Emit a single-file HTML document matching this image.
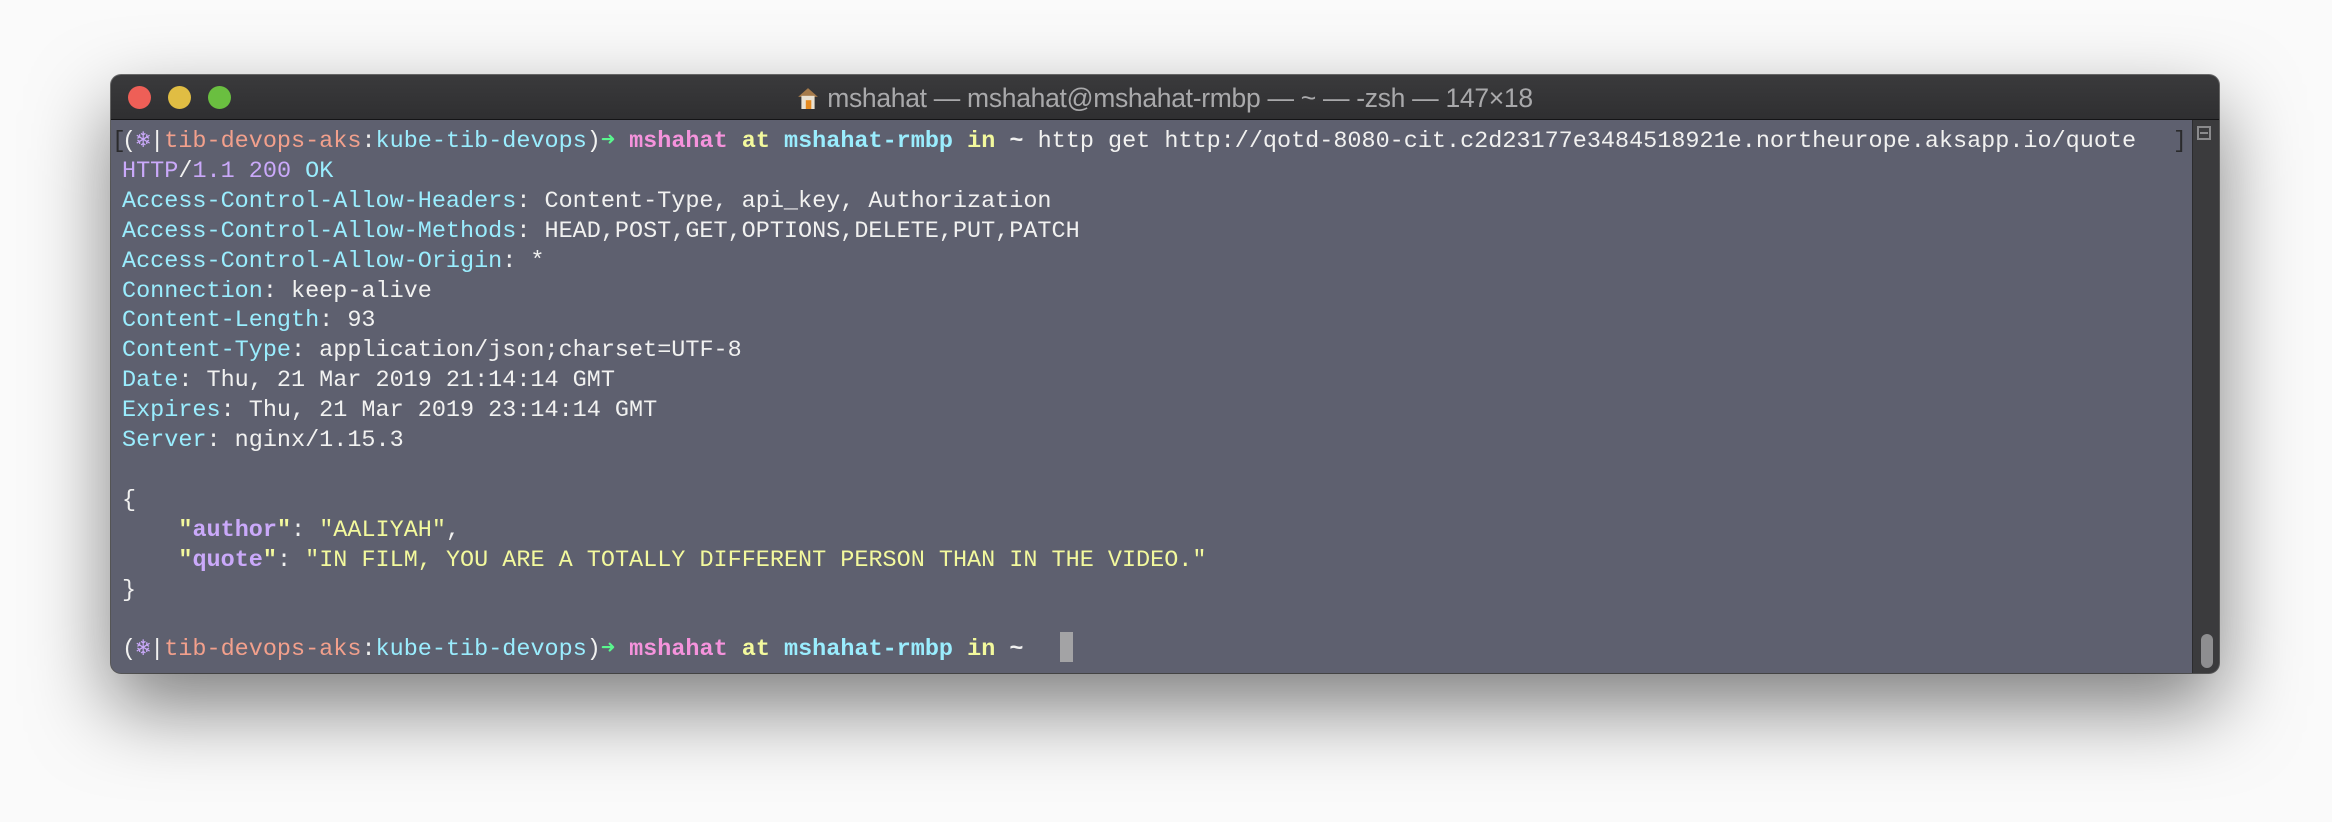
<!DOCTYPE html>
<html><head><meta charset="utf-8"><style>
html,body{margin:0;padding:0;width:2332px;height:822px;overflow:hidden;background:#fafafa;}
.win{position:absolute;left:111px;top:75px;width:2108px;height:598px;border-radius:10px;overflow:hidden;
box-shadow:0 34px 80px rgba(0,0,0,.5),0 0 0 1px rgba(0,0,0,.55);background:#5e606f;}
.tb{position:absolute;left:0;top:0;width:100%;height:44px;background:linear-gradient(#3a3a3c,#2f2f31);border-bottom:1px solid #141416;}
.dot{position:absolute;top:11px;width:23px;height:23px;border-radius:50%;}
.title{position:absolute;left:0;right:0;top:8px;text-align:center;font:26.5px "Liberation Sans",sans-serif;color:#a9a9ab;letter-spacing:-0.3px}
pre{position:absolute;left:11px;top:52px;margin:0;font-family:"Liberation Mono","DejaVu Sans Mono",monospace;font-size:23.47px;line-height:29.9px;color:#f1f1f0;}
.c{color:#9aedfe}.w{color:#f1f1f0}.l{color:#caa9fa}.y{color:#f3f99d}.s{color:#f2a08c}.p{color:#f593dc}.g{color:#5af78e}
b{font-weight:bold}
.g1{display:inline-block;width:14.08px;text-align:center;overflow:hidden;vertical-align:top}
.sb{position:absolute;right:0;top:45px;width:26px;bottom:0;background:#3b3b3d;border-left:1px solid #2c2c2e;}
.sbt{position:absolute;left:4px;top:6px;width:14px;height:14px;border:2px solid #8a8a8c;box-sizing:border-box;}
.sbt:after{content:"";position:absolute;left:1px;right:1px;top:4px;height:2px;background:#8a8a8c;}
.thumb{position:absolute;left:8px;width:12px;height:34px;border-radius:6px;background:#8e8e90;}
.cur{position:absolute;left:949px;top:557px;width:13px;height:30px;background:#a3a3a5;}
.br{position:absolute;color:#2a2a2c;font:23px "Liberation Mono",monospace;top:53px;}
</style></head><body>
<div class="win">
<div class="tb">
<div class="dot" style="left:17px;background:#ee5f57"></div>
<div class="dot" style="left:57px;background:#e0bd43"></div>
<div class="dot" style="left:97px;background:#6abf40"></div>
<div class="title"><svg width="22" height="26" viewBox="0 0 20 22" style="vertical-align:-4px;margin-right:8px"><path d="M1 10 L10 2 L19 10 Z" fill="#a57a4a"/><rect x="4" y="9" width="12" height="12" fill="#e9e1d2"/><rect x="8" y="13" width="5" height="8" fill="#e58a1f"/></svg>mshahat — mshahat@mshahat-rmbp — ~ — -zsh — 147×18</div>
</div>
<span class="br" style="left:1px">[</span><span class="br" style="left:2062px">]</span>
<pre>(<span class="l g1">❄</span><span class="w">|</span><span class="s">tib-devops-aks</span>:<span class="c">kube-tib-devops</span>)<span class="g g1"><b>➜</b></span> <b class="p">mshahat</b> <b class="y">at</b> <b class="c">mshahat-rmbp</b> <b class="y">in</b> <b class="w">~</b> http get http://qotd-8080-cit.c2d23177e3484518921e.northeurope.aksapp.io/quote
<span class="l">HTTP</span>/<span class="l">1.1 200</span> <span class="c">OK</span>
<span class="c">Access-Control-Allow-Headers</span>: Content-Type, api_key, Authorization
<span class="c">Access-Control-Allow-Methods</span>: HEAD,POST,GET,OPTIONS,DELETE,PUT,PATCH
<span class="c">Access-Control-Allow-Origin</span>: *
<span class="c">Connection</span>: keep-alive
<span class="c">Content-Length</span>: 93
<span class="c">Content-Type</span>: application/json;charset=UTF-8
<span class="c">Date</span>: Thu, 21 Mar 2019 21:14:14 GMT
<span class="c">Expires</span>: Thu, 21 Mar 2019 23:14:14 GMT
<span class="c">Server</span>: nginx/1.15.3

{
    <b class="y">"</b><b class="l">author</b><b class="y">"</b>: <span class="y">"AALIYAH"</span>,
    <b class="y">"</b><b class="l">quote</b><b class="y">"</b>: <span class="y">"IN FILM, YOU ARE A TOTALLY DIFFERENT PERSON THAN IN THE VIDEO."</span>
}

(<span class="l g1">❄</span><span class="w">|</span><span class="s">tib-devops-aks</span>:<span class="c">kube-tib-devops</span>)<span class="g g1"><b>➜</b></span> <b class="p">mshahat</b> <b class="y">at</b> <b class="c">mshahat-rmbp</b> <b class="y">in</b> <b class="w">~</b></pre>
<div class="cur"></div>
<div class="sb"><div class="sbt"></div><div class="thumb" style="top:514px"></div></div>
</div>
</body></html>
